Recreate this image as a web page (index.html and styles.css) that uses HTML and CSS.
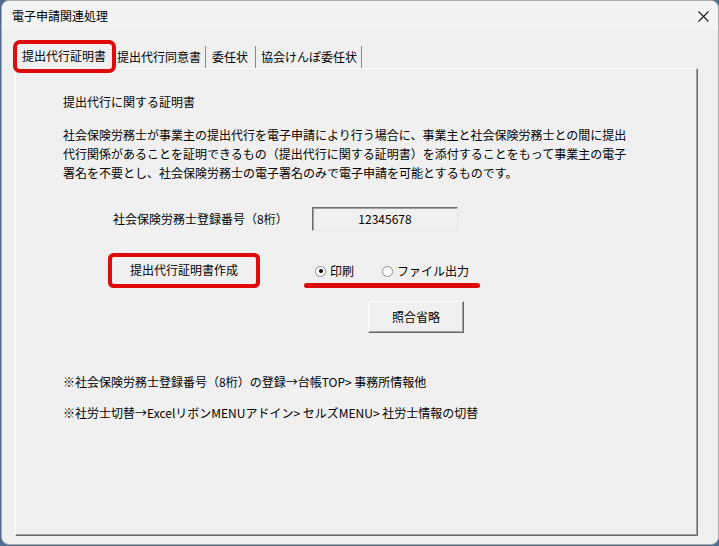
FILE: index.html
```html
<!DOCTYPE html>
<html lang="ja">
<head>
<meta charset="utf-8">
<title>電子申請関連処理</title>
<link rel="stylesheet" href="styles.css">
</head>
<body>
<div class="window">
  <div class="titlebar">
    <span class="title">電子申請関連処理</span>
    <svg class="close" width="11" height="11" viewBox="0 0 11 11"><path d="M0.5 0.5 L10.5 10.5 M10.5 0.5 L0.5 10.5" stroke="#1a1a1a" stroke-width="1.1" fill="none"/></svg>
  </div>
  <div class="client">
    <div class="tabs">
      <div class="tab tab-active">提出代行証明書</div>
      <div class="tab">提出代行同意書</div>
      <div class="tab tab-mid">委任状</div>
      <div class="tab">協会けんぽ委任状</div>
    </div>
    <div class="panel">
      <p class="heading">提出代行に関する証明書</p>
      <p class="para">社会保険労務士が事業主の提出代行を電子申請により行う場合に、事業主と社会保険労務士との間に提出<br>代行関係があることを証明できるもの（提出代行に関する証明書）を添付することをもって事業主の電子<br>署名を不要とし、社会保険労務士の電子署名のみで電子申請を可能とするものです。</p>
      <div class="reg-row">
        <span class="reg-label">社会保険労務士登録番号（8桁）</span>
        <span class="reg-input">12345678</span>
      </div>
      <div class="action-row">
        <div class="btn btn-create">提出代行証明書作成</div>
        <div class="radio-group">
          <div class="radios">
            <span class="radio radio-on"></span><span class="radio-text">印刷</span>
            <span class="radio"></span><span class="radio-text">ファイル出力</span>
          </div>
          <div class="underline"></div>
        </div>
      </div>
      <div class="btn btn-skip">照合省略</div>
      <p class="note note-1">※社会保険労務士登録番号（8桁）の登録→台帳TOP&gt; 事務所情報他</p>
      <p class="note note-2">※社労士切替→ExcelリボンMENUアドイン&gt; セルズMENU&gt; 社労士情報の切替</p>
    </div>
  </div>
</div>
</body>
</html>
```
FILE: styles.css
```css
html, body {
  margin: 0;
  padding: 0;
  height: 100%;
}
body {
  background: #4f6b8f;
  font-family: "Noto Sans CJK JP", "Noto Sans", sans-serif;
  font-size: 12px;
  color: #000;
  overflow: hidden;
}
.window {
  margin-left: 1px;
  width: 716px;
  height: 543px;
  background: #f0f0f0;
  border: 1px solid #a8a8a8;
  border-radius: 8px;
  display: flex;
  flex-direction: column;
  overflow: hidden;
}
.titlebar {
  height: 30px;
  flex: none;
  background: #f3f3f3;
  display: flex;
  align-items: center;
  justify-content: space-between;
  padding: 0 9px 0 10px;
}
.title {
  line-height: 16px;
}
.close {
  display: block;
}
.client {
  flex: 1;
  display: flex;
  flex-direction: column;
  padding: 13px 20px 8px 13px;
}
.tabs {
  display: flex;
  align-items: flex-end;
  height: 24px;
  padding-left: 2px;
  position: relative;
  z-index: 1;
}
.tab {
  height: 22px;
  line-height: 22px;
  padding: 0 4px 0 5px;
  border-right: 1px solid #8a8a8a;
  box-sizing: border-box;
  white-space: nowrap;
}
.tab-mid {
  padding: 0 7px 0 6px;
}
.tab-active {
  height: 25px;
  line-height: 23px;
  margin-bottom: -1px;
  padding: 0 6px 0 5px;
  width: 95px;
  border: none;
  background: #f0f0f0;
  border-radius: 3px;
  box-shadow: 0 0 0 4px #dd0b0b;
}
.panel {
  flex: 1;
  border-top: 1px solid #ffffff;
  border-left: 1px solid #ffffff;
  border-right: 1px solid #6a6a6a;
  border-bottom: 1px solid #6a6a6a;
  box-shadow: inset -1px -1px 0 #a0a0a0;
  padding: 24px 0 0 47px;
  display: flex;
  flex-direction: column;
  align-items: flex-start;
}
.heading {
  margin: 0;
  line-height: 18px;
}
.para {
  margin: 14px 0 0;
  line-height: 19px;
  white-space: nowrap;
}
.reg-row {
  margin-top: 25px;
  display: flex;
  align-items: center;
  padding-left: 50px;
}
.reg-label {
  width: 199px;
  line-height: 18px;
}
.reg-input {
  width: 146px;
  height: 24px;
  box-sizing: border-box;
  border-top: 1px solid #6d6d6d;
  border-left: 1px solid #6d6d6d;
  border-right: 1px solid #e8e8e8;
  border-bottom: 1px solid #e8e8e8;
  box-shadow: inset 1px 1px 0 #a0a0a0;
  text-align: center;
  line-height: 22px;
}
.action-row {
  margin-top: 26px;
  display: flex;
  align-items: flex-start;
  margin-left: 49px;
}
.btn {
  box-sizing: border-box;
  text-align: center;
  background: #f0f0f0;
}
.btn-create {
  width: 144px;
  height: 27px;
  line-height: 25px;
  border-radius: 2px;
  box-shadow: 0 0 0 4px #dd0b0b;
}
.radio-group {
  margin: 5px 0 0 48px;
  display: flex;
  flex-direction: column;
}
.radios {
  display: flex;
  align-items: center;
  height: 18px;
  padding-left: 11px;
}
.radio {
  width: 11px;
  height: 11px;
  box-sizing: border-box;
  border-radius: 50%;
  border: 1px solid #8c8c8c;
  background: #ffffff;
  position: relative;
  flex: none;
}
.radio-on::after {
  content: "";
  position: absolute;
  left: 2.5px;
  top: 2.5px;
  width: 4px;
  height: 4px;
  border-radius: 50%;
  background: #000;
}
.radio-text {
  margin: 0 28px 0 4px;
  line-height: 18px;
}
.radio-text:last-child {
  margin-right: 15px;
}
.underline {
  margin-top: 3px;
  width: 176px;
  height: 5px;
  border-radius: 3px;
  background: #dd0b0b;
}
.btn-skip {
  margin: 13px 0 0 305px;
  width: 96px;
  height: 32px;
  line-height: 30px;
  border-top: 1px solid #ffffff;
  border-left: 1px solid #ffffff;
  border-right: 1px solid #6a6a6a;
  border-bottom: 1px solid #6a6a6a;
  box-shadow: inset -1px -1px 0 #a0a0a0;
}
.note {
  margin: 0;
  line-height: 18px;
  white-space: nowrap;
}
.note-1 {
  margin-top: 40px;
}
.note-2 {
  margin-top: 13px;
}
```
